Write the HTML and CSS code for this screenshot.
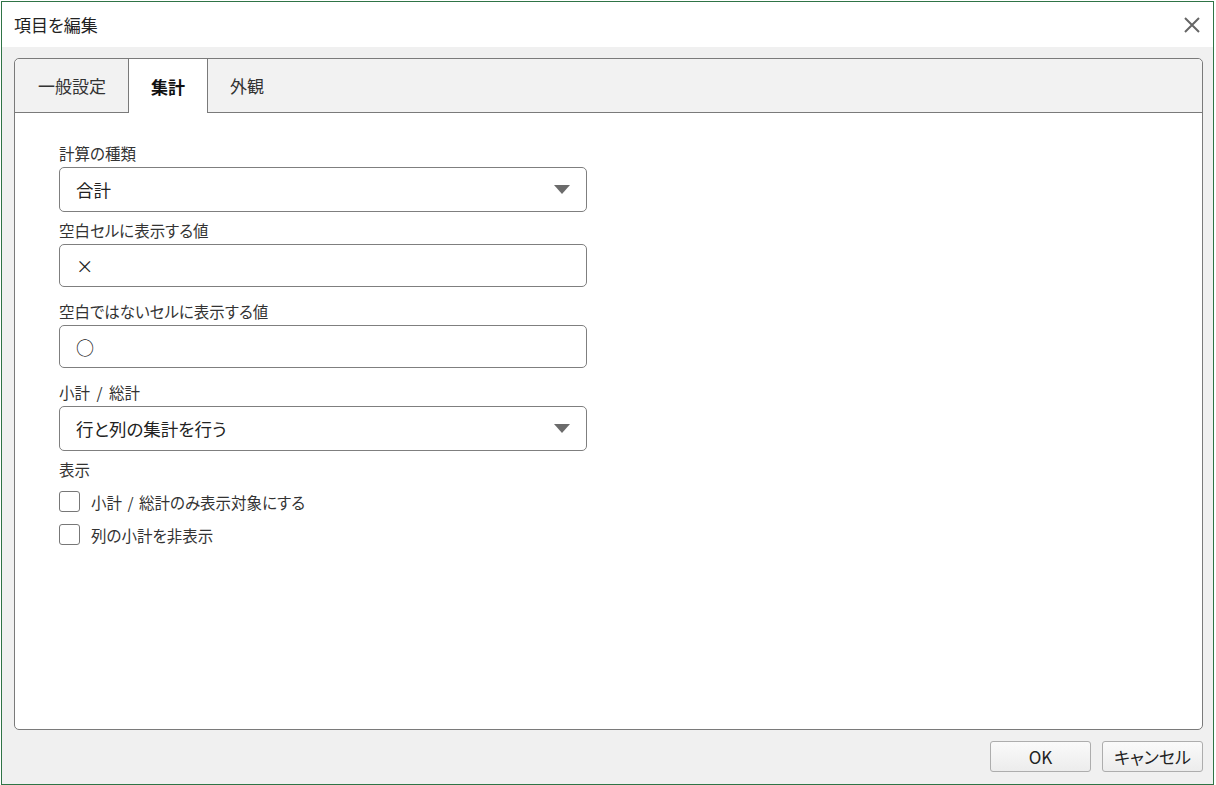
FILE: index.html
```html
<!DOCTYPE html>
<html lang="ja">
<head>
    <meta charset="UTF-8">
    <title>項目を編集</title>
    <link rel="stylesheet" href="styles.css">
</head>
<body>
    <div class="dialog">
        <div class="titlebar">
            <span class="title">項目を編集</span>
            <svg class="close" width="16" height="16" viewBox="0 0 16 16">
                <path d="M1 1 L15 15 M15 1 L1 15" stroke="#666" stroke-width="2" fill="none"/>
            </svg>
        </div>

        <div class="body">
            <div class="panel">
                <div class="tabs">
                    <div class="tab first">一般設定</div>
                    <div class="tab active">集計</div>
                    <div class="tab">外観</div>
                </div>

                <div class="content">
                    <div class="label">計算の種類</div>
                    <div class="select">
                        <span>合計</span>
                        <span class="arrow"></span>
                    </div>

                    <div class="label">空白セルに表示する値</div>
                    <div class="input">×</div>

                    <div class="label">空白ではないセルに表示する値</div>
                    <div class="input"><span class="mark">○</span></div>

                    <div class="label">小計 / 総計</div>
                    <div class="select">
                        <span>行と列の集計を行う</span>
                        <span class="arrow"></span>
                    </div>

                    <div class="label label-last">表示</div>
                    <div class="check-row">
                        <span class="checkbox"></span>
                        <span>小計 / 総計のみ表示対象にする</span>
                    </div>
                    <div class="check-row">
                        <span class="checkbox"></span>
                        <span>列の小計を非表示</span>
                    </div>
                </div>
            </div>
        </div>

        <div class="footer">
            <button class="btn">OK</button>
            <button class="btn">キャンセル</button>
        </div>
    </div>
</body>
</html>
```

FILE: styles.css
```css
* {
    box-sizing: border-box;
}
body {
    margin: 0;
    background: #fff;
    font-family: "Noto Sans CJK JP", "Noto Sans", sans-serif;
    font-feature-settings: "palt";
    color: #222;
}
.dialog {
    width: 1213px;
    height: 784px;
    margin: 1px 0 0 1px;
    border: 1px solid #2f7446;
    background: #f0f0f0;
    display: flex;
    flex-direction: column;
}
.titlebar {
    height: 45px;
    background: #fff;
    display: flex;
    align-items: center;
    justify-content: space-between;
    padding: 0 13px 0 12px;
}
.title {
    font-size: 17px;
    color: #222;
}
.close {
    display: block;
}
.body {
    flex: 1;
    display: flex;
    padding: 11px 10px 0 12px;
}
.panel {
    flex: 1;
    display: flex;
    flex-direction: column;
    border: 1px solid #7a7a7a;
    border-radius: 5px;
    background: #fff;
}
.tabs {
    height: 54px;
    display: flex;
    background: #f2f2f2;
    border-bottom: 1px solid #7a7a7a;
    border-radius: 5px 5px 0 0;
}
.tab {
    padding: 0 22px;
    display: flex;
    align-items: center;
    font-size: 17px;
    color: #333;
}
.tab.first {
    padding: 0 22px 0 23px;
}
.tab.active {
    background: #fff;
    font-weight: bold;
    color: #111;
    border-left: 1px solid #7a7a7a;
    border-right: 1px solid #7a7a7a;
    margin-bottom: -1px;
}
.content {
    padding: 30px 0 0 44px;
}
.label {
    font-size: 15.5px;
    line-height: 20px;
    word-spacing: 3px;
    color: #333;
    margin-bottom: 4px;
}
.label-last {
    margin-bottom: 12px;
}
.select,
.input {
    width: 528px;
    border: 1px solid #7f7f7f;
    border-radius: 5px;
    background: #fff;
    display: flex;
    align-items: center;
    padding: 0 16px;
    font-size: 17.5px;
    color: #222;
}
.select {
    height: 45px;
    justify-content: space-between;
    margin-bottom: 8px;
}
.input {
    height: 43px;
    margin-bottom: 14px;
}
.mark {
    font-size: 18px;
}
.arrow {
    width: 0;
    height: 0;
    border-left: 8px solid transparent;
    border-right: 8px solid transparent;
    border-top: 9px solid #6b6b6b;
}
.check-row {
    display: flex;
    align-items: center;
    gap: 11px;
    height: 21px;
    margin-bottom: 12px;
    font-size: 15.5px;
    word-spacing: 2px;
    color: #333;
}
.checkbox {
    width: 21px;
    height: 21px;
    border: 1px solid #777;
    border-radius: 3px;
    background: #fff;
}
.footer {
    height: 54px;
    display: flex;
    justify-content: flex-end;
    gap: 11px;
    padding: 11px 10px 0 0;
}
.btn {
    width: 101px;
    height: 31px;
    border: 1px solid #adadad;
    border-radius: 3px;
    background: linear-gradient(#fafafa, #ececec);
    font-family: "Noto Sans CJK JP", "Noto Sans", sans-serif;
    font-feature-settings: "palt";
    font-size: 17px;
    color: #222;
    padding: 0;
}
```
